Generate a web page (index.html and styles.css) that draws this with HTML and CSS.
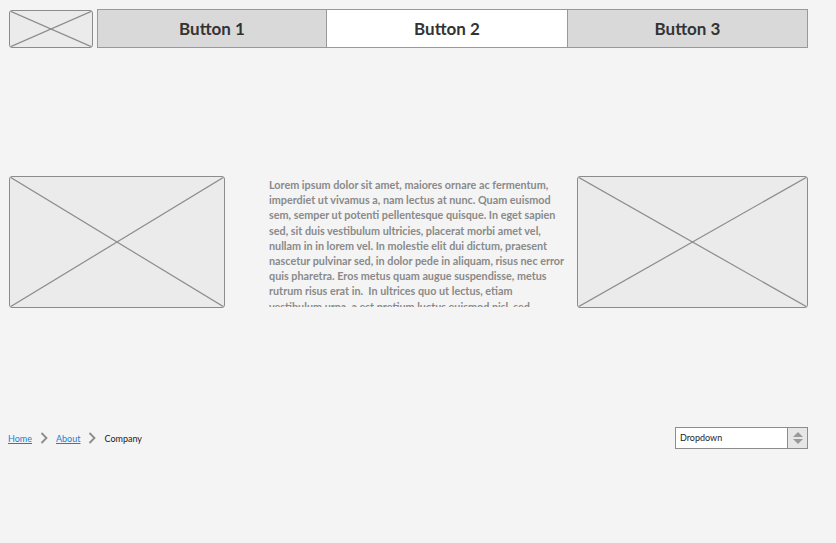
FILE: index.html
```html
<!DOCTYPE html>
<html lang="en">
<head>
    <meta charset="UTF-8">
    <title>Wireframe</title>
    <link rel="stylesheet" href="styles.css">
</head>
<body>

<div class="header">
    <div class="placeholder logo">
        <svg viewBox="0 0 100 100" preserveAspectRatio="none">
            <line x1="0" y1="0" x2="100" y2="100"/>
            <line x1="0" y1="100" x2="100" y2="0"/>
        </svg>
    </div>
    <div class="nav">
        <div class="nav-btn b1">Button 1</div>
        <div class="nav-btn b2 active">Button 2</div>
        <div class="nav-btn b3">Button 3</div>
    </div>
</div>

<div class="content">
    <div class="placeholder pic-left">
        <svg viewBox="0 0 100 100" preserveAspectRatio="none">
            <line x1="0" y1="0" x2="100" y2="100"/>
            <line x1="0" y1="100" x2="100" y2="0"/>
        </svg>
    </div>
    <div class="text">
        Lorem ipsum dolor sit amet, maiores ornare ac fermentum, imperdiet ut vivamus a, nam lectus at nunc. Quam euismod sem, semper ut potenti pellentesque quisque. In eget sapien sed, sit duis vestibulum ultricies, placerat morbi amet vel, nullam in in lorem vel. In molestie elit dui dictum, praesent nascetur pulvinar sed, in dolor pede in aliquam, risus nec error quis pharetra. Eros metus quam augue suspendisse, metus rutrum risus erat in.&nbsp; In ultrices quo ut lectus, etiam vestibulum urna, a est pretium luctus euismod nisl, sed...
    </div>
    <div class="placeholder pic-right">
        <svg viewBox="0 0 100 100" preserveAspectRatio="none">
            <line x1="0" y1="0" x2="100" y2="100"/>
            <line x1="0" y1="100" x2="100" y2="0"/>
        </svg>
    </div>
</div>

<div class="footer">
    <div class="crumbs">
        <a href="#">Home</a>
        <svg class="chev" viewBox="0 0 8 12"><polyline points="1.5,1 6.5,6 1.5,11"/></svg>
        <a href="#">About</a>
        <svg class="chev" viewBox="0 0 8 12"><polyline points="1.5,1 6.5,6 1.5,11"/></svg>
        <span>Company</span>
    </div>
    <div class="dropdown">
        <div class="dd-label">Dropdown</div>
        <div class="dd-arrows">
            <svg viewBox="0 0 12 16">
                <polygon points="6,2 11,7 1,7"/>
                <polygon points="1,9 11,9 6,14"/>
            </svg>
        </div>
    </div>
</div>

</body>
</html>
```

FILE: styles.css
```css
body {
    margin: 0;
    padding: 0 28px 0 9px;
    background-color: #f4f4f4;
    font-family: Lato, "Open Sans", sans-serif;
    width: 836px;
    height: 543px;
    box-sizing: border-box;
    overflow: hidden;
}
.header {
    display: flex;
    align-items: flex-start;
    margin-top: 9px;
}
.placeholder {
    background-color: #ebebeb;
    border: 1px solid #8c8c8c;
    border-radius: 3px;
    box-sizing: border-box;
    overflow: hidden;
}
.placeholder svg {
    display: block;
    width: 100%;
    height: 100%;
}
.placeholder line {
    stroke: #8c8c8c;
    stroke-width: 1.2;
    vector-effect: non-scaling-stroke;
}
.logo {
    width: 85px;
    height: 38px;
    margin-top: 1px;
}
.nav {
    display: flex;
    margin-left: 4px;
    border: 1px solid #999;
    height: 39px;
    box-sizing: border-box;
}
.nav-btn {
    display: flex;
    align-items: center;
    justify-content: center;
    background-color: #d9d9d9;
    color: #333;
    font-weight: bold;
    font-size: 17px;
    box-sizing: border-box;
}
.nav-btn + .nav-btn {
    border-left: 1px solid #999;
}
.b1 { width: 228px; }
.b2 { width: 241px; }
.b3 { width: 240px; }
.active {
    background-color: #fff;
}
.content {
    display: flex;
    margin-top: 128px;
    height: 132px;
}
.pic-left {
    width: 216px;
    height: 132px;
}
.pic-right {
    width: 231px;
    height: 132px;
    margin-left: 8px;
}
.text {
    margin-left: 44px;
    width: 297px;
    margin-right: 3px;
    height: 131px;
    padding-top: 1px;
    box-sizing: border-box;
    overflow: hidden;
    font-size: 10.8px;
    font-weight: bold;
    line-height: 15.2px;
    color: #8a8a8a;
}
.footer {
    display: flex;
    justify-content: space-between;
    align-items: center;
    margin-top: 119px;
    height: 22px;
}
.crumbs {
    display: flex;
    align-items: center;
    margin-left: -1px;
    font-size: 9px;
}
.crumbs a {
    color: #1580d6;
    text-decoration: underline;
}
.crumbs span {
    color: #222;
}
.chev {
    width: 8px;
    height: 12px;
    margin: 0 8px;
}
.chev polyline {
    fill: none;
    stroke: #8a8a8a;
    stroke-width: 1.8;
}
.dropdown {
    display: flex;
    width: 133px;
    height: 22px;
    border: 1px solid #8c8c8c;
    box-sizing: border-box;
    background-color: #fff;
}
.dd-label {
    flex: 1;
    font-size: 9px;
    color: #222;
    padding-left: 4px;
    line-height: 20px;
}
.dd-arrows {
    width: 19px;
    border-left: 1px solid #8c8c8c;
    background-color: #e6e6e6;
    display: flex;
    align-items: center;
    justify-content: center;
}
.dd-arrows svg {
    width: 12px;
    height: 16px;
}
.dd-arrows polygon {
    fill: #999;
}
```
